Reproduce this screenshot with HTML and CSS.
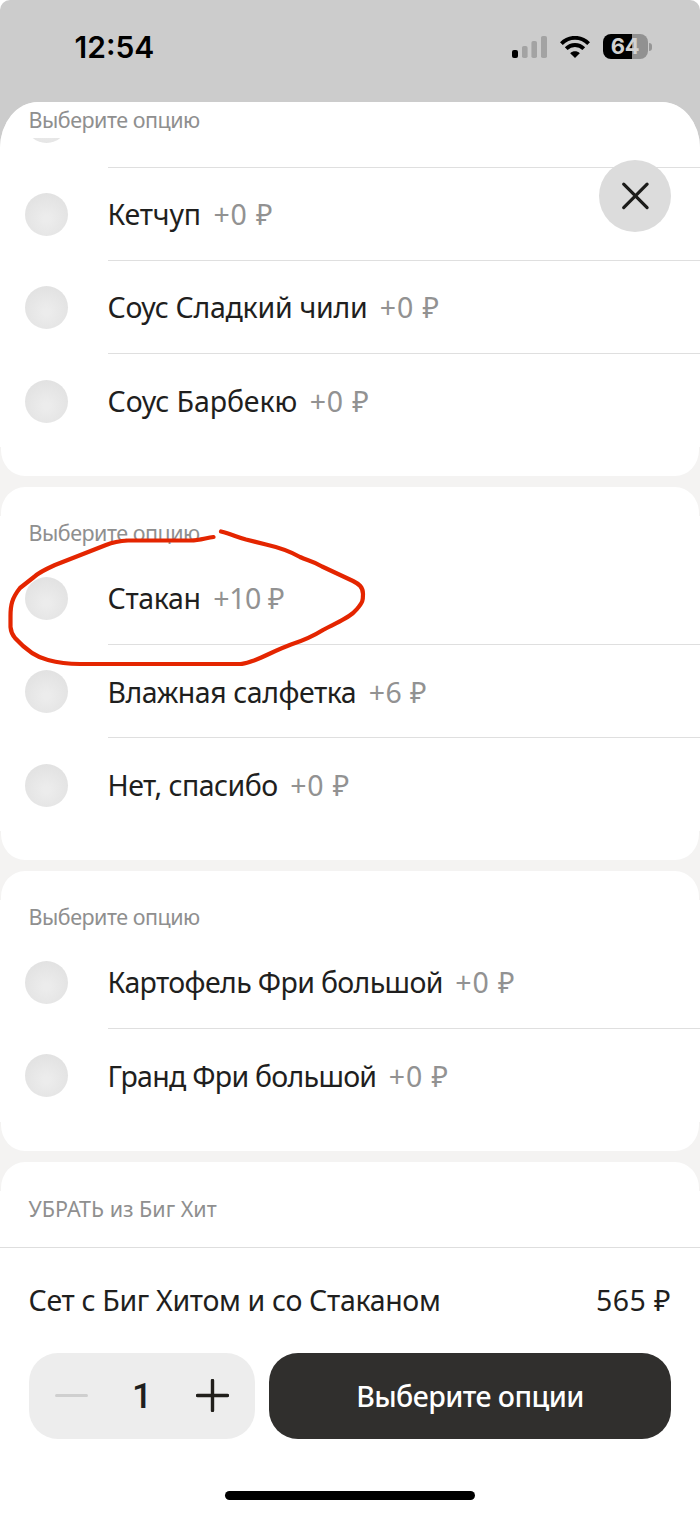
FILE: index.html
```html
<!DOCTYPE html>
<html lang="ru">
<head>
<meta charset="utf-8">
<title>Выберите опции</title>
<link rel="stylesheet" href="styles.css">
</head>
<body>
<div class="screen">
  <header class="status">
    <span class="time">12:54</span>
    <div class="indicators">
      <svg class="signal" width="35" height="22" viewBox="0 0 35 22">
        <rect x="0" y="14" width="6" height="8" rx="2" fill="#000"/>
        <rect x="10" y="10" width="5.6" height="12" rx="1.8" fill="#a3a3a3"/>
        <rect x="19.4" y="5" width="5.6" height="17" rx="1.8" fill="#a3a3a3"/>
        <rect x="29" y="0" width="6" height="22" rx="1.8" fill="#a3a3a3"/>
      </svg>
      <svg class="wifi" width="30" height="22" viewBox="0 0 30 22">
        <g fill="none" stroke="#000" stroke-width="3.9">
          <path d="M1.4 7.6C9-0.1 21-0.1 28.6 7.6"/>
          <path d="M6.2 12.7C11.2 7.8 18.8 7.8 23.8 12.7"/>
        </g>
        <path d="M10.2 17.3C13 14.7 17 14.7 19.8 17.3L15 22Z" fill="#000"/>
      </svg>
      <div class="battery"><div class="cell">64</div><i class="tip"></i></div>
    </div>
  </header>

  <main class="sheet">
    <div class="pinned"><h2 class="label">Выберите опцию</h2></div>
    <div class="sliver"><i class="radio"></i></div>
    <section class="group first">
      <div class="row"><i class="radio"></i><div class="line"><span class="name n1">Кетчуп</span><span class="price">+0 ₽</span></div></div>
      <div class="row"><i class="radio"></i><div class="line"><span class="name n2">Соус Сладкий чили</span><span class="price">+0 ₽</span></div></div>
      <div class="row"><i class="radio"></i><div class="line"><span class="name n3">Соус Барбекю</span><span class="price">+0 ₽</span></div></div>
      <div class="foot"></div>
    </section>
    <section class="group">
      <div class="head"></div>
      <h2 class="label">Выберите опцию</h2>
      <div class="row"><i class="radio"></i><div class="line"><span class="name n4">Стакан</span><span class="price p10">+10 ₽</span></div></div>
      <div class="row"><i class="radio"></i><div class="line"><span class="name n5">Влажная салфетка</span><span class="price p6">+6 ₽</span></div></div>
      <div class="row"><i class="radio"></i><div class="line"><span class="name n6">Нет, спасибо</span><span class="price">+0 ₽</span></div></div>
      <div class="foot"></div>
    </section>
    <section class="group">
      <div class="head"></div>
      <h2 class="label">Выберите опцию</h2>
      <div class="row"><i class="radio"></i><div class="line"><span class="name n7">Картофель Фри большой</span><span class="price">+0 ₽</span></div></div>
      <div class="row"><i class="radio"></i><div class="line"><span class="name n8">Гранд Фри большой</span><span class="price">+0 ₽</span></div></div>
      <div class="foot"></div>
    </section>
    <section class="group last">
      <div class="head"></div>
      <h2 class="label remove">УБРАТЬ из Биг Хит</h2>
    </section>
    <button class="close" aria-label="Закрыть">
      <svg width="72" height="72" viewBox="0 0 72 72"><path d="M24.7 24.2L48.1 47.6M48.1 24.2L24.7 47.6" stroke="#1c1c1a" stroke-width="3.2" stroke-linecap="round"/></svg>
    </button>
    <svg class="mark" width="370" height="150" viewBox="0 520 370 150">
      <path fill="none" stroke="#e42500" stroke-width="4.2" stroke-linecap="round" stroke-linejoin="round" d="M213.500 537C206 538 199 540.500 191 540.500H128C118 541 112 542.500 106 545L55 565C45 569.500 38 573 34 577L20 588C12 598 10.500 605 10.500 616V627C11 633 12.500 635 15 638C25 649 35 657 48 660C59 663 66 664 80 664H240C245 664 249 662 254 660.500C266 656 276 650 291 644.500C305 640 315 635 323 630C337 622 350 618 357 609C363 602 363 600 363 594C363 587 359 584 353 581L322 566.500C313 561 307 560.500 300 557C287 549.500 277 547 266 544.500L246 539.500C237 537 231 534 221 531.500"/>
    </svg>
  </main>

  <footer class="bar">
    <div class="total"><span class="set">Сет с Биг Хитом и со Стаканом</span><span class="sum">565 ₽</span></div>
    <div class="actions">
      <div class="stepper">
        <svg width="33" height="33" viewBox="0 0 33 33"><path d="M1.500 16.500H31.500" stroke="#cfcfcf" stroke-width="3" stroke-linecap="round"/></svg>
        <span class="count">1</span>
        <svg width="33" height="33" viewBox="0 0 33 33"><path d="M1.500 16.500H31.500M16.500 1.500V31.500" stroke="#211f1b" stroke-width="3.400" stroke-linecap="round"/></svg>
      </div>
      <button class="submit"><span class="cta">Выберите опции</span></button>
    </div>
    <div class="home"></div>
  </footer>
</div>
</body>
</html>
```
FILE: styles.css
```css
* { box-sizing: border-box; }
body { margin: 0; background: #fff; font-family: "Noto Sans", sans-serif; color: #1f1f1e; }
.screen { width: 700px; height: 1515px; overflow: hidden; display: flex; flex-direction: column; background: #ccc; border-radius: 10px 10px 0 0; }
.status { height: 102px; flex: none; display: flex; justify-content: space-between; padding: 29px 48px 0 74.500px; }
.time { font: 600 30px/36px Inter, sans-serif; color: #000; }
.indicators { display: flex; height: 35px; align-items: center; }
.signal { margin-right: 13px; }
.wifi { margin-right: 13px; }
.battery { display: flex; align-items: center; gap: 1.500px; }
.cell { width: 45px; height: 25px; border-radius: 8px; background: linear-gradient(90deg, #000 64%, #919191 64%); color: #d2d2d2; font: 700 22px/25px Inter, sans-serif; letter-spacing: -0.400px; text-align: center; }
.tip { width: 3px; height: 8px; border-radius: 0 4px 4px 0; background: #969696; }

.sheet { position: relative; height: 1145px; flex: none; overflow: hidden; border-radius: 38px 38px 0 0 / 46px 46px 0 0; background: #f4f3f2; }
.pinned { height: 36px; background: #fff; }
.pinned .label { padding-top: 3px; }
.label { margin: 0; padding-left: 28.500px; font-size: 21.500px; font-weight: 400; line-height: 30px; letter-spacing: -0.490px; color: #8f8f8f; white-space: nowrap; }
.sliver { height: 28.800px; overflow: hidden; background: #fff; display: flex; align-items: flex-start; padding-left: 25px; }
.sliver .radio { margin-top: -38.500px; }
.group { margin-bottom: 11.500px; background: #fff; }
.head { height: 28.500px; }
.foot { height: 29px; }
.head, .foot { border: solid #f4f3f2; border-width: 0 1px; background: #f4f3f2; overflow: hidden; }
.head::before, .foot::before { content: ""; display: block; height: 100%; background: #fff; }
.head::before { border-radius: 24px 24px 0 0 / 26px 26px 0 0; }
.foot::before { border-radius: 0 0 24px 24px / 0 0 26px 26px; }
.head + .label { height: 35.200px; line-height: 34.500px; }
.head + .remove { line-height: 36.500px; letter-spacing: 0; }
.row { display: flex; align-items: center; height: 93.300px; padding-left: 25px; gap: 39.500px; }
.radio { flex: none; width: 43px; height: 43px; border-radius: 50%; background: radial-gradient(circle at 50% 60%, #ececec 10%, #e2e2e2 75%); }
.row .radio { margin-top: 2px; }
.line { flex: 1; height: 100%; display: flex; align-items: center; border-top: 1px solid #dfdfdf; font-size: 28.500px; white-space: nowrap; padding-top: 0.500px; }
.label + .row .line { border-top-color: transparent; }
.n1 { letter-spacing: -0.180px; }
.n2 { letter-spacing: -0.270px; }
.n3 { letter-spacing: -0.090px; }
.n4 { letter-spacing: -0.330px; }
.n5 { letter-spacing: -0.460px; }
.n6 { letter-spacing: -0.540px; }
.n7 { letter-spacing: -0.640px; }
.n8 { letter-spacing: -0.720px; }
.price { margin-left: 12.500px; letter-spacing: 0.900px; color: #929292; }
.p10 { letter-spacing: -0.400px; }
.p6 { letter-spacing: 0.400px; }
.last { margin: 0; height: 90px; }
.close { position: absolute; left: 599px; top: 58px; width: 72px; height: 72px; padding: 0; border: 0; border-radius: 50%; background: #dcdcdc; }
.close svg { display: block; }
.mark { position: absolute; left: 0; top: 418px; }

.bar { flex: 1; background: #fff; border-top: 1px solid #dedede; padding: 33px 29px 0; }
.total { display: flex; justify-content: space-between; font-size: 28.500px; line-height: 38px; }
.set { margin-left: -0.500px; letter-spacing: -0.340px; }
.sum { letter-spacing: 0.400px; }
.actions { display: flex; gap: 14px; margin-top: 34px; height: 86px; }
.stepper { width: 226px; border-radius: 29px; background: #ededed; display: flex; align-items: center; justify-content: space-between; padding: 0 26px 1px; }
.count { font: 500 35.500px Roboto, sans-serif; }
.submit { flex: 1; border: 0; border-radius: 29px; padding: 0; background: #302f2d; color: #fff; font: 500 28.500px "Noto Sans", sans-serif; letter-spacing: -0.560px; }
.home { width: 250px; height: 9px; margin: 52px auto 0; border-radius: 5px; background: #000; }
```
